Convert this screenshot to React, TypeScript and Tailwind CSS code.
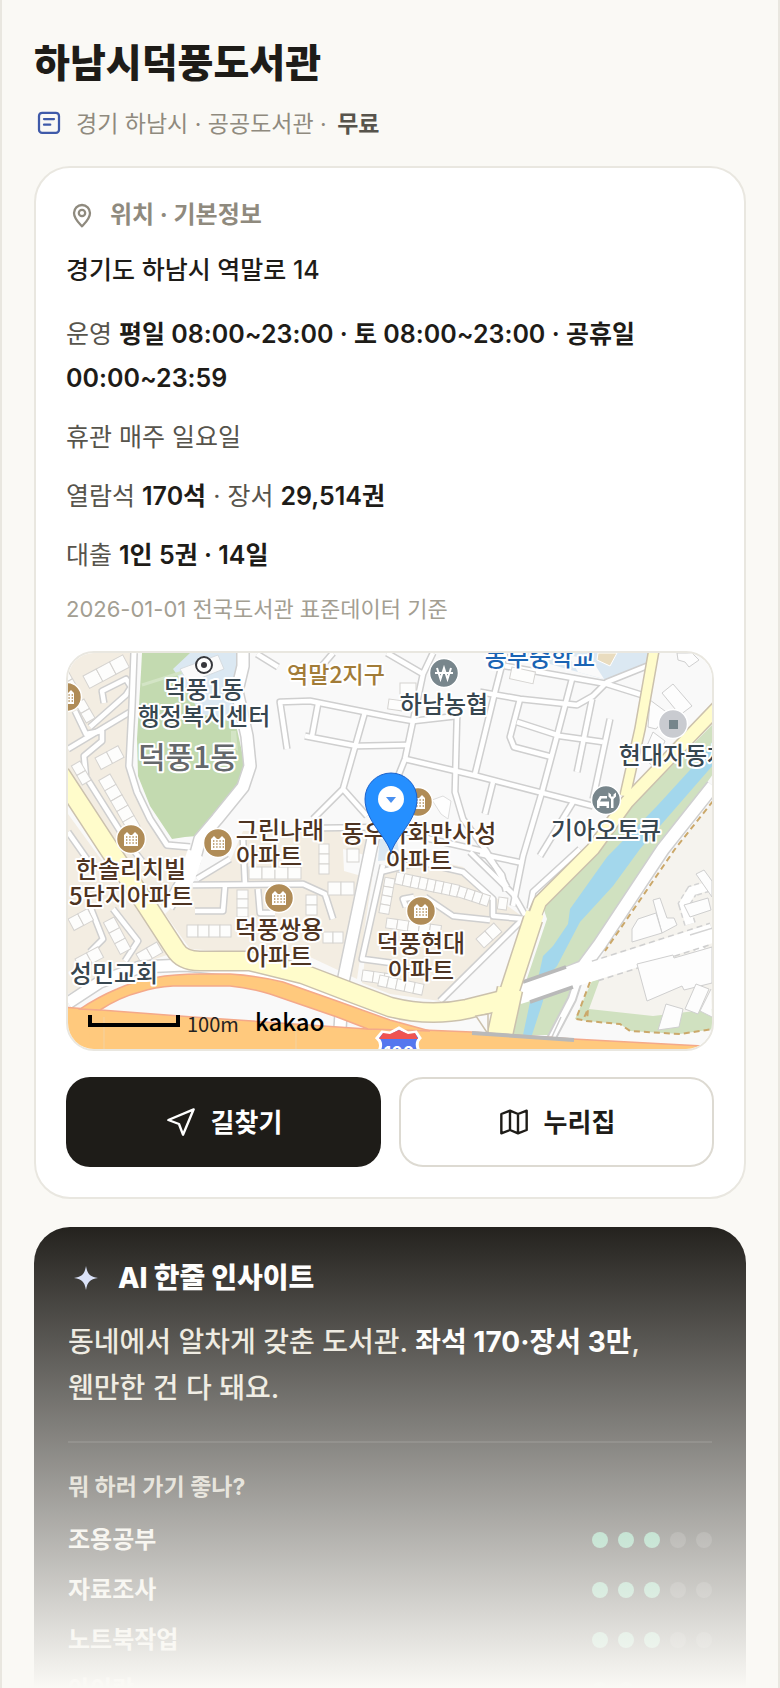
import type { ReactNode } from "react";

const PURPOSES = [
  { name: "조용공부", score: 3 },
  { name: "자료조사", score: 3 },
  { name: "노트북작업", score: 3 },
  { name: "아이랑", score: 2 },
];

const LANES = [
  "M68 750L130 713",
  "M75 712L86 735L102 732L102 742L84 757L86 778L127 843L142 862",
  "M104 704L102 692L126 680L131 688L126 696L90 728",
  "M68 833L87 860",
  "M90 907L103 940L90 953",
  "M113 910L138 942L125 962",
  "M257 655L278 668",
  "M287 750L280 703L310 702L390 718L413 722L457 717",
  "M318 705L312 737M305 737L357 747L407 746",
  "M365 713L343 790L367 817M343 790L313 820",
  "M333 654L315 675",
  "M323 829L390 828L430 840L487 853",
  "M387 654L423 675M433 654L423 675L413 722L405 760L395 785",
  "M457 717L455 793L463 820L487 853L507 888",
  "M505 654L495 693L475 775",
  "M405 760L477 777L593 807",
  "M480 693L520 700L577 706L593 697L607 683L647 667",
  "M505 667L607 685L642 696",
  "M572 680L557 737L542 793L523 857L513 907",
  "M520 700L510 738L514 748L552 758",
  "M517 723L560 737L603 743",
  "M592 700L577 773",
  "M610 720L593 800",
  "M493 783L485 815",
  "M573 803L540 857",
  "M480 855L523 864",
  "M193 886L303 885L325 895L333 920",
  "M195 912L223 912L225 887",
  "M197 880L230 860",
  "M243 840L245 885M258 890L260 914L275 914",
  "M383 866L362 960L392 964",
  "M380 873L420 863L463 873L493 900L493 917L525 920",
  "M406 908L403 900L414 898M425 898L453 917L490 921",
  "M525 918L440 1002",
  "M470 853L513 895L525 916",
  "M484 853L502 876L506 892",
  "M580 850L533 893L530 910",
];

// x, y, angle, count, cell width, cell height
const BLOCKS = [
  [83, 677, -28, 3, 15, 14],
  [95, 759, -28, 2, 13, 13],
  [110, 775, 60, 5, 12, 13],
  [80, 762, 60, 2, 11, 10],
  [84, 700, 60, 2, 11, 10],
  [68, 672, 60, 2, 9, 9],
  [68, 920, -28, 2, 11, 13],
  [114, 918, 62, 3, 12, 12],
  [75, 960, -28, 2, 13, 12],
  [136, 955, -30, 2, 12, 12],
  [187, 926, 0, 4, 11, 12],
  [249, 868, 0, 4, 13, 12],
  [328, 883, 0, 2, 13, 13],
  [248, 891, 90, 3, 9, 11],
  [329, 845, 90, 3, 10, 10],
  [317, 896, 90, 2, 10, 11],
  [323, 933, 0, 2, 10, 11],
  [363, 971, 8, 3, 11, 11],
  [397, 873, 12, 8, 8, 12],
  [460, 887, 18, 4, 8, 11],
  [387, 919, 8, 5, 11, 10],
  [380, 976, 12, 5, 9, 11],
  [395, 880, 100, 4, 9, 10],
  [499, 898, 8, 1, 9, 12],
  [476, 940, -42, 2, 12, 12],
  [400, 684, 0, 1, 16, 14],
  [389, 700, 8, 1, 14, 10],
  [512, 668, 12, 1, 24, 12],
  [347, 850, 0, 1, 12, 13],
];

const LABELS = [
  { x: 204, y: 699, color: "#37464f", lines: ["덕풍1동", "행정복지센터"] },
  { x: 444, y: 714, color: "#37464f", lines: ["하남농협"] },
  { x: 540, y: 667, color: "#1a64b4", lines: ["동부중학교"] },
  { x: 674, y: 765, color: "#37464f", lines: ["현대자동차"] },
  { x: 606, y: 840, color: "#37464f", lines: ["기아오토큐"] },
  { x: 280, y: 840, color: "#4e3422", lines: ["그린나래"] },
  { x: 269, y: 866, color: "#4e3422", lines: ["아파트"] },
  { x: 419, y: 843, color: "#4e3422", lines: ["동우가화만사성", "아파트"] },
  { x: 131, y: 879, color: "#4e3422", lines: ["한솔리치빌", "5단지아파트"] },
  { x: 279, y: 939, color: "#4e3422", lines: ["덕풍쌍용", "아파트"] },
  { x: 421, y: 953, color: "#4e3422", lines: ["덕풍현대", "아파트"] },
  { x: 114, y: 983, color: "#37464f", lines: ["성민교회"] },
];

const APARTMENTS = [
  [67, 698],
  [131, 840],
  [218, 844],
  [279, 899],
  [418, 803],
  [421, 912],
];

function Apartment({ x, y }: { x: number; y: number }) {
  return (
    <g transform={`translate(${x} ${y})`}>
      <circle r="14.5" fill="#b08c57" stroke="#fff" strokeWidth="1.5" />
      <path d="M-7 7V-4L-4 -7L-1 -4H1L4 -7L7 -4V7Z" fill="#fff" />
      <path
        d="M-5 -2H6M-5 1H6M-5 4H6"
        stroke="#b08c57"
        strokeWidth="1.4"
        strokeDasharray="1.4 1.8"
      />
    </g>
  );
}

function LibraryMap() {
  return (
    <svg
      viewBox="68 654 644 396"
      preserveAspectRatio="xMidYMid slice"
      className="block h-[396px] w-full"
      role="img"
      aria-label="하남시덕풍도서관 주변 지도"
    >
      <rect x="0" y="600" width="800" height="500" fill="#f9f9f9" />

      {/* housing estates */}
      <g fill="#f3ede2">
        <path d="M68 654H134L131 767L140 800L165 842L190 852L193 872L165 910L110 852L68 785Z" />
        <path d="M68 815L170 955L110 975L68 995Z" />
        <path d="M196 885L230 862L243 832H375L376 850L372 880L357 980L310 958L190 950L165 915Z" />
        <path d="M385 868L420 858L463 868L495 898L523 918L440 1002L390 995L362 984L366 950Z" />
      </g>
      <path d="M343 850L372 858L372 880L344 872Z" fill="#fafafa" />

      {/* park and public grounds */}
      <path
        d="M142 654H200L237 730L245 767L243 782L220 811L197 837L185 838L172 840L150 807L138 777L137 740L141 673Z"
        fill="#c3dab0"
      />
      <path d="M190 654H245L235 677L236 724L200 715L187 690L173 670Z" fill="#dbe8f2" />
      <path d="M142 686L186 672" stroke="#d3e4c5" strokeWidth="3" />
      <path d="M231 732H236L238 752L231 748Z" fill="#d3e4c5" />
      <path d="M180 670L218 656L224 670L188 684Z" fill="#fafafa" stroke="#d5dbe0" />
      <path d="M513 654H650L647 667L607 681L560 668Z" fill="#dbe8f2" />
      <path d="M598 654H617L610 667L597 661Z" fill="#e9dcbf" stroke="#fff" />
      <path d="M568 656L592 661L604 680L578 673Z" fill="#fafafa" />
      <path d="M380 832L397 840L400 860L378 862Z" fill="#dbe8f2" />

      {/* stream */}
      <path
        d="M713 725L580 860L543 908L547 920L508 1036H550L580 985L587 953L657 853L713 775Z"
        fill="#d0e1c0"
      />
      <path
        d="M713 745L700 760L657 807L607 858L570 910L568 925L553 947L543 957L538 980L530 1003L523 1036H532L543 1002L545 980L557 967L580 923L613 887L640 850L713 766Z"
        fill="#a3d7ec"
      />

      {/* east side */}
      <path d="M713 802L675 850L605 952L588 985L576 1020L620 1025L713 1032Z" fill="#f5f3ee" />
      <path
        d="M592 982L600 980L589 1010L653 1017L713 1010V1030L680 1035L630 1032L620 1025L587 1022L575 1020Z"
        fill="#d0e1c0"
      />
      <path d="M580 975L572 1000L550 1042" fill="none" stroke="#cfcfcf" strokeWidth="10" />
      <path d="M580 975L572 1000L550 1042" fill="none" stroke="#fff" strokeWidth="6" />
      <path d="M561 1018L551 1040" stroke="#cfcfcf" strokeWidth="1.5" />
      <path d="M713 787L663 850L600 945L583 968L560 978" fill="none" stroke="#cfcfcf" strokeWidth="15" />
      <path d="M713 787L663 850L600 945L583 968L525 990" fill="none" stroke="#fff" strokeWidth="12" />
      <path d="M690 925L684 905L692 892L712 886" fill="none" stroke="#d4d4d4" strokeWidth="12" strokeDasharray="5 3" />
      <path d="M690 925L684 905L692 892L712 886" fill="none" stroke="#fff" strokeWidth="9" />
      <path d="M695 930L708 985" stroke="#d4d4d4" strokeWidth="12" strokeDasharray="5 3" />
      <path d="M695 930L708 985" stroke="#fff" strokeWidth="9" />
      <path d="M595 972L713 934" stroke="#cfcfcf" strokeWidth="22" strokeDasharray="6 4" />
      <path d="M518 996L575 978L620 964L713 934" fill="none" stroke="#fff" strokeWidth="19" />
      <path d="M690 936L713 929" stroke="#d4d4d4" strokeWidth="1.5" />
      <path d="M523 983L566 968M530 1003L573 988" stroke="#b9b9b9" strokeWidth="3.5" />
      <path
        d="M713 802L675 850L605 952M590 983L576 1020L583 1021L588 1010L587 1022L620 1025L630 1032L680 1035L713 1030"
        fill="none"
        stroke="#cba86a"
        strokeWidth="2"
        strokeDasharray="6 4"
      />
      <g fill="#fdfdfd" stroke="#cfcfcf">
        <path d="M637 965L673 956L674 959L712 948V984L684 991L682 987L647 1002Z" />
        <path d="M653 901L660 899L667 919L674 919L677 926L662 934Z" />
        <path d="M632 930L638 920L656 914L662 934L632 943Z" />
        <path d="M666 1005L683 1010L679 1028L658 1031Z" />
        <path d="M696 985L709 990L698 1015L685 1010Z" />
        <path d="M711 990L700 1012L712 1018" />
        <path d="M696 875L704 871L712 882V898Z" />
        <path d="M684 906L708 899L711 911L690 918Z" />
        <path d="M662 694L673 685L692 707L680 716Z" />
        <path d="M677 654L692 654L699 661L689 668L685 663L678 661Z" />
        <path d="M650 701L669 715L656 730L648 728Z" />
        <path d="M653 733L665 742L654 768L642 758Z" />
      </g>

      {/* local lanes */}
      <g fill="none" strokeLinejoin="round">
        {LANES.map((d) => (
          <path key={d} d={d} stroke="#cfcfcf" strokeWidth="7.5" />
        ))}
        {LANES.map((d) => (
          <path key={d} d={d} stroke="#fff" strokeWidth="4.5" />
        ))}
      </g>

      <g fill="#fdfdfc" stroke="#d5d3d0">
        {BLOCKS.map(([x, y, angle, count, w, h]) => (
          <g key={`${x}-${y}`} transform={`translate(${x} ${y}) rotate(${angle})`}>
            {Array.from({ length: count }, (_, i) => (
              <rect key={i} x={i * w} width={w} height={h} />
            ))}
          </g>
        ))}
      </g>
      <path d="M432 801L443 797L451 802L448 820L441 815Z" fill="#fefefe" stroke="#dedede" />

      {/* wider streets */}
      <g fill="none" strokeLinejoin="round">
        <path
          d="M134 654L132 707L129 767L137 793L150 820L167 846L190 848"
          stroke="#cfcfcf"
          strokeWidth="8"
        />
        <path
          d="M243 645L243 667L237 692L247 737L250 767L243 788L217 820L200 840L194 862L168 908M374 835L343 983L340 1030M68 1004L100 983L140 968L185 966L250 972L303 985L400 1020"
          stroke="#cfcfcf"
          strokeWidth="14"
        />
        <path
          d="M134 654L132 707L129 767L137 793L150 820L167 846L190 848"
          stroke="#fff"
          strokeWidth="5"
        />
        <path
          d="M243 645L243 667L237 692L247 737L250 767L243 788L217 820L200 840L194 862L168 908M374 835L343 983L340 1030M68 1004L100 983L140 968L185 966L250 972L303 985L400 1020"
          stroke="#fff"
          strokeWidth="11"
        />
      </g>
      <path d="M188 850L203 858L194 882L166 912Z" fill="#fff" />

      {/* main roads */}
      <g fill="none" strokeLinejoin="round">
        <g stroke="#cbc1ad">
          <path d="M655 645L640 730L625 797" strokeWidth="12" />
          <path d="M720 706L627 803L593 850L540 903L533 920" strokeWidth="15" />
          <path
            d="M60 775L107 847L147 907L175 950Q182 962 200 962L250 962L303 975L350 993L390 1008Q430 1018 467 1010L507 1000L533 920"
            strokeWidth="21"
          />
          <path d="M510 990L499 1040" strokeWidth="27" />
        </g>
        <g stroke="#fffccb">
          <path d="M655 645L640 730L625 797" strokeWidth="9" />
          <path d="M720 706L627 803L593 850L540 903L532 925" strokeWidth="12" />
          <path
            d="M60 775L107 847L147 907L175 950Q182 962 200 962L250 962L303 975L350 993L390 1008Q430 1018 467 1010L507 1000L535 914"
            strokeWidth="18"
          />
          <path d="M510 990L499 1040" strokeWidth="24" />
        </g>
      </g>
      <path d="M476 1017L488 1035L488 1015Z" fill="#f9f9f9" stroke="#cbc1ad" strokeWidth="1.5" />

      {/* expressway */}
      <g fill="#ffc97d" stroke="#f4a98a" strokeWidth="1.5">
        <path d="M60 1008L193 1018L367 1030L423 1031L472 1033L573 1040L720 1048V1060H60Z" />
        <path d="M80 1010Q98 998 117 990Q150 975 200 975H230Q260 977 283 983L337 1002L390 1021L430 1032L368 1030L337 1018L270 995Q250 989 230 987H173Q155 988 140 993Q120 998 100 1011Z" />
      </g>
      <path d="M88 1012L110 1014L193 1020L367 1032L470 1036L460 1045H90Z" fill="#ffc97d" />
      <path d="M472 1034L574 1041" stroke="#b9b9b9" strokeWidth="4" />
      <path d="M296 1030V1050M104 1018V1050" stroke="#f3d2a2" />

      <g>
        <path
          d="M382 1033L390 1034L399 1029L408 1034L416 1033L420 1039Q415 1044 419 1052H379Q383 1044 377 1039Z"
          fill="#5577ee"
          stroke="#fff"
          strokeWidth="3"
        />
        <path d="M383 1034L390 1035L399 1031L408 1035L415 1034L418 1040H379Z" fill="#ef5350" />
        <text x="399" y="1060" fontSize="17" fontWeight="700" textAnchor="middle" fill="#fff">
          100
        </text>
      </g>

      {/* places */}
      <g>
        {APARTMENTS.map(([x, y]) => (
          <Apartment key={`${x}-${y}`} x={x} y={y} />
        ))}
        <circle cx="204" cy="666" r="8" fill="#fff" stroke="#37383c" strokeWidth="2" />
        <circle cx="204" cy="666" r="3" fill="#37383c" />
        <circle cx="444" cy="674" r="14.5" fill="#78868c" stroke="#fff" strokeWidth="1.5" />
        <path
          d="M437 669L440.5 680L444 669L447.5 680L451 669M435 674H453"
          fill="none"
          stroke="#fff"
          strokeWidth="2"
        />
        <g>
          <circle cx="606" cy="801" r="14.5" fill="#78868c" stroke="#fff" strokeWidth="1.5" />
          <path
            d="M597 809V802L600 797H607V799.5H601.5L600 802.5H609V809H606.5V807H599.5V809Z"
            fill="#fff"
          />
          <path
            d="M611 809V800L608.5 797.5V793.5L611 795.5V797.5H613.5V795.5L616 793.5V797.5L613.5 800V809Z"
            fill="#fff"
          />
        </g>
        <circle cx="673" cy="725" r="14.5" fill="#c9cbd0" stroke="#fff" strokeWidth="1.5" />
        <rect x="669" y="721" width="9" height="9" fill="#76858b" />
      </g>

      <g
        textAnchor="middle"
        stroke="#fff"
        strokeWidth="4"
        strokeLinejoin="round"
        className="[paint-order:stroke] font-['Noto_Sans_CJK_KR',sans-serif] font-medium"
      >
        <text x="188" y="769" fontSize="30" fill="#65686b">
          덕풍1동
        </text>
        <text x="336" y="684" fontSize="23" fill="#a27c38">
          역말2지구
        </text>
        {LABELS.map((label) => (
          <text key={`${label.x}-${label.y}`} fontSize="24" fill={label.color}>
            {label.lines.map((line, i) => (
              <tspan key={line} x={label.x} y={label.y + i * 27}>
                {line}
              </tspan>
            ))}
          </text>
        ))}
      </g>

      {/* library marker */}
      <path
        d="M391 854C387 838 365 822 365 800A26 26 0 0 1 417 800C417 822 395 838 391 854Z"
        fill="#258fff"
        stroke="#1b62cc"
      />
      <circle cx="391" cy="800" r="13" fill="#fff" />
      <path d="M386 798H396L391 804Z" fill="#4a90f0" />

      <path d="M90 1016V1026H178V1016" fill="none" stroke="#000" strokeWidth="4" />
      <g className="font-['Noto_Sans_CJK_KR',sans-serif]">
        <text x="187" y="1033" fontSize="20" fill="#222">
          100m
        </text>
        <text x="255" y="1032" fontSize="24" fontWeight="500">
          kakao
        </text>
      </g>
    </svg>
  );
}

function Fact({ children }: { children: ReactNode }) {
  return <p className="mt-[15px] text-[25px] leading-11 text-[#57544c]">{children}</p>;
}

function Strong({ children }: { children: ReactNode }) {
  return <strong className="font-semibold text-[#1e1c18]">{children}</strong>;
}

export default function App() {
  return (
    <div className="relative h-screen overflow-hidden border-x-2 border-[#e9e7e0] bg-[#faf9f5] px-8 pt-9 font-[Inter,'Noto_Sans_CJK_KR',sans-serif] text-[#1e1c18]">
      <h1 className="text-[39px] leading-[54px] font-extrabold">하남시덕풍도서관</h1>
      <div className="mt-4 flex items-center gap-3 text-[23px] leading-9 text-[#8f8a7e]">
        <svg
          viewBox="0 0 24 24"
          className="size-[30px]"
          fill="none"
          stroke="#3f5aa9"
          strokeWidth="1.8"
          strokeLinecap="round"
        >
          <rect x="4" y="3" width="16" height="16" rx="2.5" />
          <path d="M8 8h8M8 12.5h5" />
        </svg>
        <p>
          경기 하남시 · 공공도서관 · <strong className="ml-1 font-semibold text-[#57544c]">무료</strong>
        </p>
      </div>

      <section className="mt-6 rounded-[36px] border-2 border-[#e9e7e0] bg-white p-[30px]">
        <h2 className="flex items-center gap-3 text-2xl leading-[34px] font-bold text-[#8f8a7e]">
          <svg
            viewBox="0 0 24 24"
            className="size-8"
            fill="none"
            stroke="currentColor"
            strokeWidth="1.7"
            strokeLinejoin="round"
          >
            <path d="M12 20.5c-1.5-1.8-6-5.500-6-10a6 6 0 0 1 12 0c0 4.500-4.500 8.200-6 10z" />
            <circle cx="12" cy="10.5" r="2.4" />
          </svg>
          위치 · 기본정보
        </h2>
        <p className="mt-[18px] text-[25px] leading-10 font-medium">경기도 하남시 역말로 14</p>
        <div className="mt-[22px]">
          <p className="text-[25px] leading-11 text-[#57544c]">
            운영 <Strong>평일 08:00~23:00 · 토 08:00~23:00 · 공휴일 00:00~23:59</Strong>
          </p>
          <Fact>휴관 매주 일요일</Fact>
          <Fact>
            열람석 <Strong>170석</Strong> · 장서 <Strong>29,514권</Strong>
          </Fact>
          <Fact>
            대출 <Strong>1인 5권 · 14일</Strong>
          </Fact>
        </div>
        <p className="mt-4 text-[22px] leading-8 text-[#a39e92]">
          2026-01-01 전국도서관 표준데이터 기준
        </p>

        <div className="mt-[26px] overflow-hidden rounded-[28px] border-2 border-[#e9e7e0]">
          <LibraryMap />
        </div>

        <div className="mt-[26px] grid grid-cols-2 gap-[18px] text-[26px] font-bold">
          <button className="flex h-[90px] items-center justify-center gap-[14px] rounded-3xl bg-[#1e1c18] text-white">
            <svg
              viewBox="0 0 24 24"
              className="size-8"
              fill="none"
              stroke="currentColor"
              strokeWidth="1.8"
              strokeLinejoin="round"
            >
              <path d="M21.5 2.5L2.5 10.5l8 3L13.5 21.5z" />
            </svg>
            길찾기
          </button>
          <button className="flex h-[90px] items-center justify-center gap-[14px] rounded-3xl border-2 border-[#dddad2] bg-white">
            <svg
              viewBox="0 0 24 24"
              className="size-8"
              fill="none"
              stroke="currentColor"
              strokeWidth="1.8"
              strokeLinejoin="round"
            >
              <path d="M2.5 6L9 3.5l6 2.5 6.5-2.5v14.5L15 20.5 9 18l-6.5 2.5zM9 3.5V18M15 6v14.5" />
            </svg>
            누리집
          </button>
        </div>
      </section>

      <section className="mt-7 rounded-[36px] bg-[#1e1c18] px-[34px] py-8 text-white">
        <h2 className="flex items-center gap-[14px] text-[28px] leading-[38px] font-extrabold">
          <svg viewBox="0 0 24 24" className="size-9" fill="#d5def8">
            <path d="M12 4c1 5.500 2.500 7 8 8-5.500 1-7 2.500-8 8-1-5.500-2.500-7-8-8 5.500-1 7-2.500 8-8z" />
          </svg>
          AI 한줄 인사이트
        </h2>
        <p className="mt-[22px] text-[28px] leading-[46px] font-medium text-[#eae6db]">
          동네에서 알차게 갖춘 도서관. <strong className="font-bold text-white">좌석 170·장서 3만</strong>,
          <br />
          웬만한 건 다 돼요.
        </p>
        <div className="mt-[30px] border-t-2 border-white/10 pt-7">
          <h3 className="text-[23px] leading-8 font-bold text-[#cfcabd]">뭐 하러 가기 좋나?</h3>
          <ul className="mt-5 flex flex-col gap-4 text-2xl leading-[34px] font-semibold text-[#f2efe7]">
            {PURPOSES.map((purpose) => (
              <li key={purpose.name} className="flex items-center justify-between">
                {purpose.name}
                <span className="flex gap-[10px]">
                  {[1, 2, 3, 4, 5].map((n) => (
                    <i
                      key={n}
                      className={
                        n <= purpose.score
                          ? "size-4 rounded-full bg-[#5dba91]"
                          : "size-4 rounded-full bg-white/15"
                      }
                    />
                  ))}
                </span>
              </li>
            ))}
          </ul>
        </div>
      </section>

      {/* fade out towards the bottom of the preview */}
      <div className="pointer-events-none absolute inset-x-[-2px] bottom-0 h-[474px] bg-[linear-gradient(to_bottom,rgba(250,249,245,0),#faf9f5)]" />
    </div>
  );
}
